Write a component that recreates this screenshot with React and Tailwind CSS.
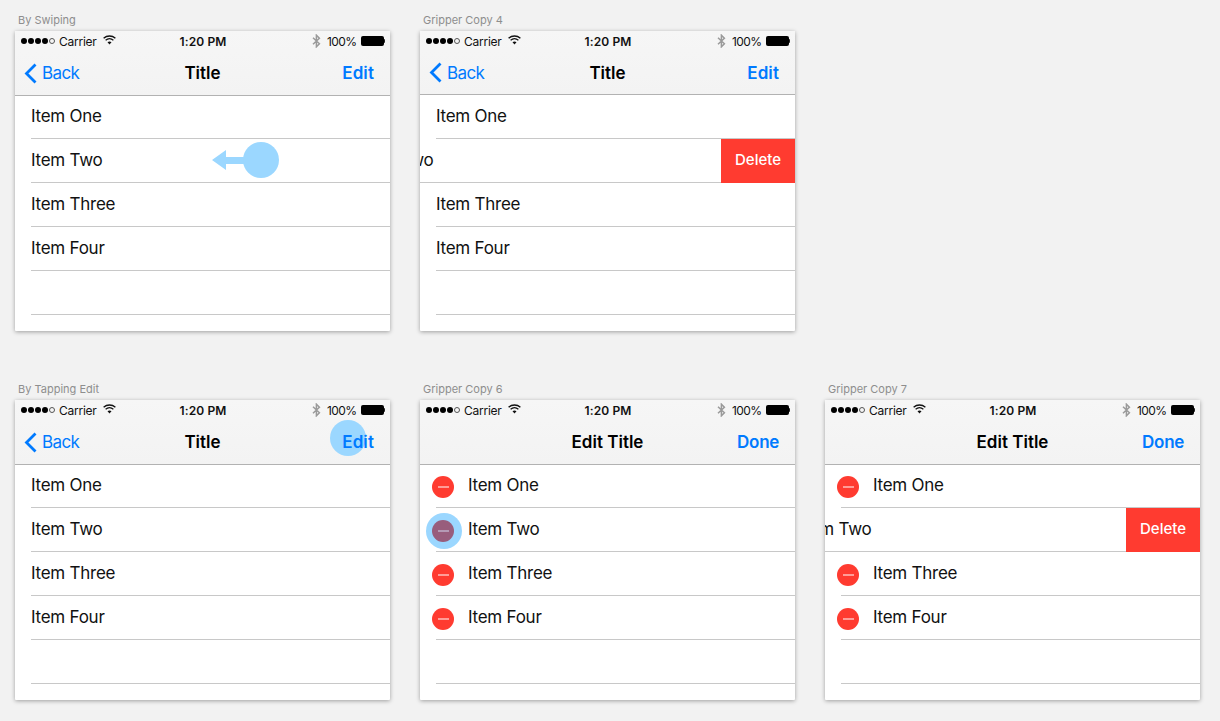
const ITEMS = ['Item One', 'Item Two', 'Item Three', 'Item Four', '']

function Wifi() {
  return (
    <svg width="13" height="10" viewBox="0 0 13 10" className="ml-[6px] -mt-[3px]">
      <path d="M0.6 3.3C4 0.2 9 0.2 12.4 3.3" fill="none" stroke="#111" strokeWidth="1.3" />
      <path d="M2.6 5.3C4.9 3.3 8.1 3.3 10.4 5.3" fill="none" stroke="#111" strokeWidth="1.3" />
      <path d="M4.5 7.2C5.7 6.2 7.3 6.2 8.5 7.2L6.5 9.4Z" fill="#111" />
    </svg>
  )
}

function Bluetooth() {
  return (
    <svg width="9" height="14" viewBox="0 0 9 14" className="mr-[6px]">
      <path d="M1 3.8L7.4 9.8L4.4 12.8V1.2L7.4 4.2L1 10.2" fill="none" stroke="#9a9a9a" strokeWidth="1.5" />
    </svg>
  )
}

function Battery() {
  return (
    <div className="ml-[4px] flex items-center">
      <div className="h-[10px] w-[23px] rounded-[2px] bg-black" />
      <div className="h-[4px] w-[1.5px] rounded-r-[1px] bg-[#222]" />
    </div>
  )
}

function StatusBar() {
  return (
    <div className="grid h-5 grid-cols-[1fr_auto_1fr] items-center pl-[6px] pr-[5px] text-[12px] text-[#111]">
      <div className="flex items-center">
        <div className="flex gap-px">
          {[0, 1, 2, 3].map((i) => (
            <div key={i} className="h-[6px] w-[6px] rounded-full bg-black" />
          ))}
          <div className="h-[6px] w-[6px] rounded-full border border-[#555]" />
        </div>
        <span className="ml-[4px] translate-y-px tracking-[-0.25px]">Carrier</span>
        <Wifi />
      </div>
      <div className="translate-y-px font-semibold tracking-[0.1px]">1:20 PM</div>
      <div className="flex items-center justify-end">
        <Bluetooth />
        <span className="translate-y-px tracking-[-0.6px]">100%</span>
        <Battery />
      </div>
    </div>
  )
}

function NavBar({ title, left, right, tapped, short }) {
  return (
    <div className="relative z-10 bg-gradient-to-b from-[#f6f6f6] to-[#f3f3f3] shadow-[0_1px_0_#b2b2b2]">
      <StatusBar />
      <div
        className={
          'relative flex items-center justify-between pl-[9px] pr-4 text-[17px] ' + (short ? 'h-[43px]' : 'h-11')
        }
      >
        {tapped ? <div className="absolute left-[315px] top-0 h-9 w-9 rounded-full bg-[#9bd7ff]" /> : null}
        {left ? (
          <div className="flex items-center text-[#007aff]">
            <svg width="13" height="21" viewBox="0 0 13 21" className="mr-[5px]">
              <path d="M11.5 1.5L2.5 10.5L11.5 19.5" fill="none" stroke="#007aff" strokeWidth="2.8" />
            </svg>
            <span className="translate-y-px tracking-[-0.6px]">Back</span>
          </div>
        ) : (
          <div />
        )}
        <div className="absolute inset-x-0 translate-y-px text-center font-semibold text-black">{title}</div>
        <div
          className={
            'relative translate-y-px font-semibold text-[#007aff] ' +
            (right === 'Edit' ? 'tracking-[0.1px]' : 'tracking-[-0.3px]')
          }
        >
          {right}
        </div>
      </div>
    </div>
  )
}

function MinusButton({ pressed }) {
  return (
    <div
      className={
        'relative -ml-1 mr-[14px] mt-[2px] flex h-[22px] w-[22px] shrink-0 items-center justify-center rounded-full ' +
        (pressed ? 'bg-[#985d7c]' : 'bg-[#ff3b30]')
      }
    >
      {pressed ? (
        <div className="absolute -bottom-[7px] -left-[6px] -right-[8px] -top-[7px] -z-10 rounded-full bg-[#9bd7ff]" />
      ) : null}
      <div className={'h-[2px] w-[11px] ' + (pressed ? 'bg-[#b59ab5]' : 'bg-[#ff9d97]')} />
    </div>
  )
}

function Row({ label, editing, pressed }) {
  return (
    <div className="ml-4 flex h-11 items-center border-b border-[#c8c8c8] tracking-[-0.25px]">
      {editing && label ? <MinusButton pressed={pressed} /> : null}
      {label}
    </div>
  )
}

function SwipedRow({ label, offset }) {
  return (
    <div className="flex h-11 items-center border-b border-[#c8c8c8] tracking-[-0.25px]">
      <span className={'shrink-0 whitespace-nowrap ' + offset}>{label}</span>
      <div className="ml-auto flex h-11 w-[74px] shrink-0 self-start items-center justify-center bg-[#ff3b30] pb-px text-[15px] font-medium tracking-normal text-white">
        Delete
      </div>
    </div>
  )
}

function Phone({ label, title, left = true, right, editing, swiped, swipedOffset, pressed, tapped, short, children }) {
  return (
    <div>
      <div className="h-[18px] pl-[3px] text-[11px] leading-[14px] text-[#8e8e8e]">{label}</div>
      <div className="relative isolate h-[300px] w-[375px] overflow-hidden rounded-[1px] bg-white text-[17px] text-[#111] shadow-[0_1px_4px_rgba(0,0,0,0.35)]">
        <NavBar title={title} left={left} right={right} tapped={tapped} short={short} />
        <div className={short ? 'pt-px' : ''}>
          {ITEMS.map((item, i) =>
            swiped === i ? (
              <SwipedRow key={i} label={item} offset={swipedOffset} />
            ) : (
              <Row key={i} label={item} editing={editing} pressed={pressed === i} />
            ),
          )}
        </div>
        {children}
      </div>
    </div>
  )
}

export default function App() {
  return (
    <div
      className="h-[721px] w-[1220px] overflow-hidden bg-[#f2f2f2] pl-[15px] pt-[13px]"
      style={{ fontFamily: 'Inter, "Liberation Sans", sans-serif' }}
    >
      <div className="grid grid-cols-[375px_375px_375px] gap-x-[30px] gap-y-[51px]">
        <Phone label="By Swiping" title="Title" right="Edit">
          <svg width="67" height="36" viewBox="0 0 67 36" className="absolute left-[197px] top-[111px] z-20">
            <path d="M0 18L14 8V15H32V22H14V28Z" fill="#9bd7ff" />
            <circle cx="49" cy="18" r="18" fill="#9bd7ff" />
          </svg>
        </Phone>
        <Phone label="Gripper Copy 4" title="Title" right="Edit" short swiped={1} swipedOffset="-ml-[58px]" />
        <div />
        <Phone label="By Tapping Edit" title="Title" right="Edit" tapped />
        <Phone label="Gripper Copy 6" title="Edit Title" left={false} right="Done" editing pressed={1} />
        <Phone
          label="Gripper Copy 7"
          title="Edit Title"
          left={false}
          right="Done"
          editing
          swiped={1}
          swipedOffset="-ml-[25px]"
        />
      </div>
    </div>
  )
}
